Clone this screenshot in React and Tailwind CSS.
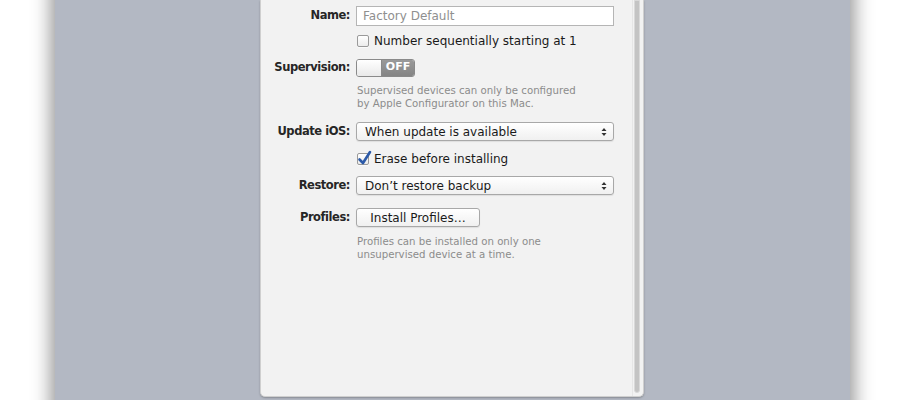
import React from 'react';

const font = { fontFamily: '"DejaVu Sans", "Liberation Sans", sans-serif' };

const Label = ({ children }) => (
  <div className="w-[95px] shrink-0 text-right pr-[6px] text-[11.5px] tracking-[-0.45px] font-bold text-[#262626]">{children}</div>
);

const Checkbox = ({ checked }) => (
  <span className="relative inline-block w-[12px] h-[12px] rounded-[2px] border border-[#9a9a9a] bg-gradient-to-b from-white to-[#ececec] shadow-[0_1px_0_rgba(255,255,255,0.6)] shrink-0">
    {checked && (
      <svg className="absolute -left-[1px] -top-[4px]" width="15" height="16" viewBox="0 0 15 16">
        <path d="M2.5 9.5 L6 13 L13 2" fill="none" stroke="#2c5aa8" strokeWidth="2.6" strokeLinecap="round" strokeLinejoin="round" />
      </svg>
    )}
  </span>
);

const Popup = ({ value }) => (
  <div className="w-[258px] h-[19px] flex items-center justify-between pl-[8px] pr-[6px] rounded-[3px] border border-[#a8a8a8] bg-gradient-to-b from-white to-[#f0f0f0] shadow-[0_1px_1px_rgba(0,0,0,0.08)] text-[12px] text-[#1a1a1a]">
    <span>{value}</span>
    <svg width="6" height="10" viewBox="0 0 6 10">
      <path d="M0.5 4 L3 1 L5.5 4 Z M0.5 6 L3 9 L5.5 6 Z" fill="#333" />
    </svg>
  </div>
);

const Help = ({ lines }) => (
  <div className="flex">
    <div className="w-[95px] shrink-0" />
    <div className="pl-[1px] text-[10.2px] leading-[13px] text-[#8c8c8c]">
      {lines.map((l) => <div key={l}>{l}</div>)}
    </div>
  </div>
);

export default function App() {
  return (
    <div className="w-[904px] h-[400px] bg-white overflow-hidden flex" style={font}>
      <div className="ml-[55px] w-[795px] h-[480px] -mt-[40px] pt-[40px] bg-[#b3b8c3] shadow-[0_0_18px_4px_rgba(0,0,0,0.42)] flex">
        <div className="ml-[205px] w-[384px] h-[397px] bg-[#f2f2f2] rounded-b-[5px] border-l border-b border-r border-[#cfcfcf] shadow-[0_1px_2px_rgba(0,0,0,0.25)] flex">
          <div className="flex-1 pt-[6px]">
            <div className="flex items-center h-[20px]">
              <Label>Name:</Label>
              <div className="w-[258px] h-[20px] border border-[#b5b5b5] bg-white flex items-center pl-[6px] text-[12px] text-[#8f8f8f]">
                Factory Default
              </div>
            </div>
            <div className="flex items-center h-[16px] mt-[7px]">
              <div className="w-[96px] shrink-0" />
              <Checkbox />
              <span className="ml-[5px] text-[12px] text-[#1a1a1a]">Number sequentially starting at 1</span>
            </div>
            <div className="flex items-center h-[19px] mt-[9px]">
              <Label>Supervision:</Label>
              <div className="w-[59px] h-[18px] rounded-[3px] border border-[#8a8a8a] flex overflow-hidden">
                <div className="w-[25px] h-full bg-gradient-to-b from-white to-[#e9e9e9] border-r border-[#8a8a8a]" />
                <div className="flex-1 h-full bg-gradient-to-b from-[#9a9a9a] to-[#858585] flex items-center justify-center text-[11px] font-bold text-white">
                  OFF
                </div>
              </div>
            </div>
            <div className="mt-[7px]">
              <Help lines={['Supervised devices can only be configured', 'by Apple Configurator on this Mac.']} />
            </div>
            <div className="flex items-center h-[19px] mt-[12px]">
              <Label>Update iOS:</Label>
              <Popup value="When update is available" />
            </div>
            <div className="flex items-center h-[16px] mt-[10px]">
              <div className="w-[96px] shrink-0" />
              <Checkbox checked />
              <span className="ml-[5px] text-[12px] text-[#1a1a1a]">Erase before installing</span>
            </div>
            <div className="flex items-center h-[19px] mt-[9px]">
              <Label>Restore:</Label>
              <Popup value="Don’t restore backup" />
            </div>
            <div className="flex items-center h-[19px] mt-[13px]">
              <Label>Profiles:</Label>
              <div className="w-[124px] h-[19px] rounded-[3px] border border-[#a8a8a8] bg-gradient-to-b from-white to-[#f0f0f0] shadow-[0_1px_1px_rgba(0,0,0,0.08)] flex items-center justify-center text-[12px] text-[#1a1a1a]">
                Install Profiles…
              </div>
            </div>
            <div className="mt-[8px]">
              <Help lines={['Profiles can be installed on only one', 'unsupervised device at a time.']} />
            </div>
          </div>
          <div className="w-[11px] h-full pr-[3px] border-l border-[#e6e6e6] flex">
            <div className="w-[8px] h-[393px] bg-[#c4c4c4] rounded-b-[4px] border border-[#d9d9d9] ml-[1px]" />
          </div>
        </div>
      </div>
    </div>
  );
}
